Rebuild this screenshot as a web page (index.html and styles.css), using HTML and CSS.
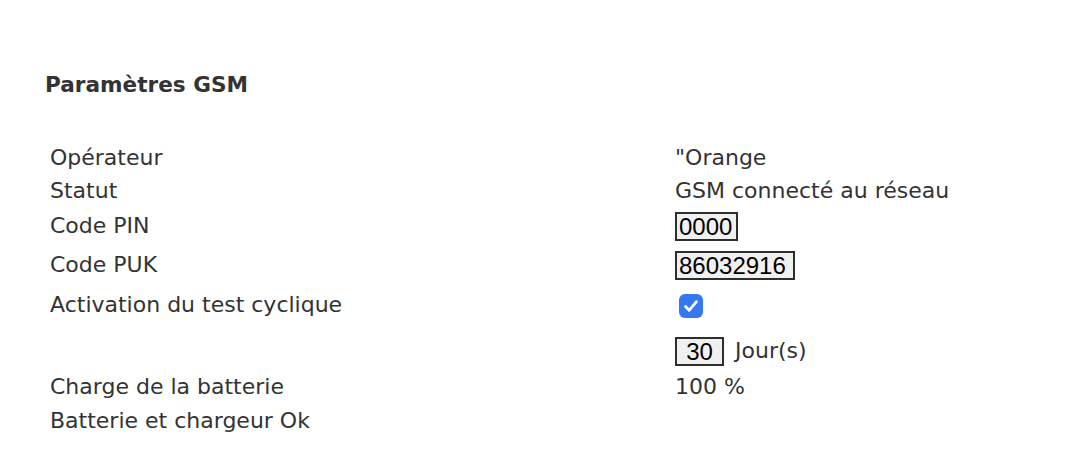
FILE: index.html
```html
<!DOCTYPE html>
<html lang="fr">
<head>
    <meta charset="UTF-8">
    <title>Paramètres GSM</title>
    <link rel="stylesheet" href="styles.css">
</head>
<body>
    <div class="panel">
        <h2>Paramètres GSM</h2>
        <table class="params">
            <tr>
                <td class="label">Opérateur</td>
                <td>"Orange</td>
            </tr>
            <tr>
                <td class="label">Statut</td>
                <td>GSM connecté au réseau</td>
            </tr>
            <tr class="row-pin">
                <td class="label">Code PIN</td>
                <td><input type="text" class="field pin" value="0000"></td>
            </tr>
            <tr class="row-puk">
                <td class="label">Code PUK</td>
                <td><input type="text" class="field puk" value="86032916"></td>
            </tr>
            <tr class="row-check">
                <td class="label">Activation du test cyclique</td>
                <td>
                    <span class="check">
                        <svg width="24" height="24" viewBox="0 0 24 24"><path d="M6.5 12.5l3.6 3.8 7.4-8.6" fill="none" stroke="#fff" stroke-width="2.8" stroke-linecap="round" stroke-linejoin="round"/></svg>
                    </span>
                </td>
            </tr>
            <tr class="row-days">
                <td class="label"></td>
                <td><input type="text" class="field days" value="30"> Jour(s)</td>
            </tr>
            <tr>
                <td class="label">Charge de la batterie</td>
                <td>100 %</td>
            </tr>
            <tr class="row-last">
                <td class="label">Batterie et chargeur Ok</td>
                <td></td>
            </tr>
        </table>
    </div>
</body>
</html>
```

FILE: styles.css
```css
body {
    margin: 0;
    font-family: "DejaVu Sans", Verdana, sans-serif;
    color: #333;
    background-color: #fff;
}
.panel {
    padding: 72px 40px 0 45px;
}
.panel h2 {
    font-size: 21.6px;
    line-height: 26px;
    font-weight: bold;
    margin: 0 0 43px 0;
}
.params {
    border-collapse: collapse;
    font-size: 22px;
}
.params td {
    height: 33px;
    line-height: 33px;
    padding: 0;
    vertical-align: middle;
    white-space: nowrap;
}
.params td.label {
    width: 625px;
    padding-left: 5px;
}
.row-pin td {
    height: 36px;
}
.row-puk td {
    height: 42px;
}
.row-check td {
    height: 38px;
}
.row-days td {
    height: 43px;
    vertical-align: bottom;
    padding-bottom: 4px;
    line-height: 29px;
}
.row-last td {
    height: 35px;
}
.field {
    box-sizing: border-box;
    height: 29px;
    margin: 0;
    padding: 0 2px;
    border: 2px solid #2e2e2e;
    background-color: #f0f0f0;
    color: #000;
    font-family: "Liberation Sans", Helvetica, Arial, sans-serif;
    font-size: 24px;
    vertical-align: middle;
}
.field.pin {
    width: 63px;
}
.field.puk {
    width: 120px;
}
.field.days {
    width: 49px;
    text-align: center;
    margin-right: 4px;
}
.check {
    display: inline-block;
    width: 24px;
    height: 24px;
    margin-left: 4px;
    border-radius: 6px;
    background-color: #3478f6;
    vertical-align: middle;
}
.check svg {
    display: block;
}
```
